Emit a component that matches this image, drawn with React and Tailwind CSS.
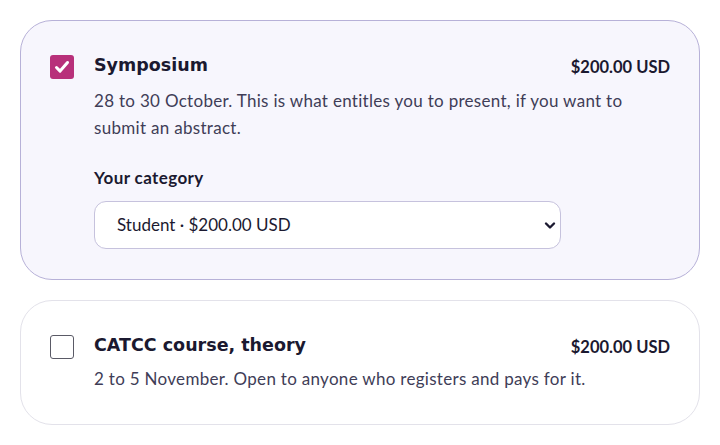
import { useState } from "react";

const title = { fontFamily: '"DejaVu Sans", sans-serif' };
const body = { fontFamily: 'Lato, "Noto Sans", sans-serif' };

function Check({ checked }) {
  if (checked) {
    return (
      <span className="flex h-6 w-6 shrink-0 items-center justify-center rounded-[3px] bg-[#b8307a]">
        <svg width="18" height="18" viewBox="0 0 18 18" fill="none">
          <path d="M3.5 9.5l3.6 3.6L14.5 4.5" stroke="white" strokeWidth="3" strokeLinecap="round" strokeLinejoin="round" />
        </svg>
      </span>
    );
  }
  return <span className="block h-6 w-6 shrink-0 rounded-[3px] border-[1.5px] border-[#5a5a66] bg-white" />;
}

export default function App() {
  const [category, setCategory] = useState("student");

  return (
    <div className="flex min-h-screen flex-col gap-5 bg-white px-5 pt-5" style={body}>
      {/* Symposium */}
      <div className="flex gap-5 rounded-[32px] border border-[#b7b1d8] bg-[#f7f6fd] pl-[29px] pr-[29px] pt-[34px] pb-[30px]">
        <Check checked />
        <div className="flex-1">
          <div className="flex h-6 items-center justify-between">
            <span className="-mt-[3px] text-[17.5px] font-bold text-[#1b1930]" style={title}>Symposium</span>
            <span className="text-[16.5px] font-bold text-[#1b1930]">$200.00 USD</span>
          </div>
          <p className="mt-2 text-[17px] leading-[27px] tracking-[0.3px] text-[#403d57]">
            28 to 30 October. This is what entitles you to present, if you want to submit an abstract.
          </p>
          <div className="mt-[25px] text-[17px] font-bold leading-6 tracking-[0.4px] text-[#1b1930]">Your category</div>
          <div className="relative mt-[11px] w-[467px]">
            <select
              value={category}
              onChange={(e) => setCategory(e.target.value)}
              className="h-12 w-full appearance-none rounded-xl border border-[#c6c2dd] bg-white pl-[22px] pr-10 text-[17px] text-[#1b1930] outline-none"
              style={body}
            >
              <option value="student">Student · $200.00 USD</option>
              <option value="regular">Regular · $300.00 USD</option>
            </select>
            <svg className="pointer-events-none absolute right-[5px] top-[20px]" width="12" height="9" viewBox="0 0 12 9" fill="none">
              <path d="M2 2.5l4 4 4-4" stroke="#1b1930" strokeWidth="2.4" strokeLinecap="round" strokeLinejoin="round" />
            </svg>
          </div>
        </div>
      </div>

      {/* CATCC course */}
      <div className="flex gap-5 rounded-[32px] border border-[#e3e2ea] bg-white pl-[29px] pr-[29px] pt-[34px] pb-[32px]">
        <Check />
        <div className="flex-1">
          <div className="flex h-6 items-center justify-between">
            <span className="-mt-[3px] text-[17.5px] font-bold text-[#1b1930]" style={title}>CATCC course, theory</span>
            <span className="text-[16.5px] font-bold text-[#1b1930]">$200.00 USD</span>
          </div>
          <p className="mt-[6px] text-[17px] leading-[27px] tracking-[0.3px] text-[#403d57]">
            2 to 5 November. Open to anyone who registers and pays for it.
          </p>
        </div>
      </div>
    </div>
  );
}
